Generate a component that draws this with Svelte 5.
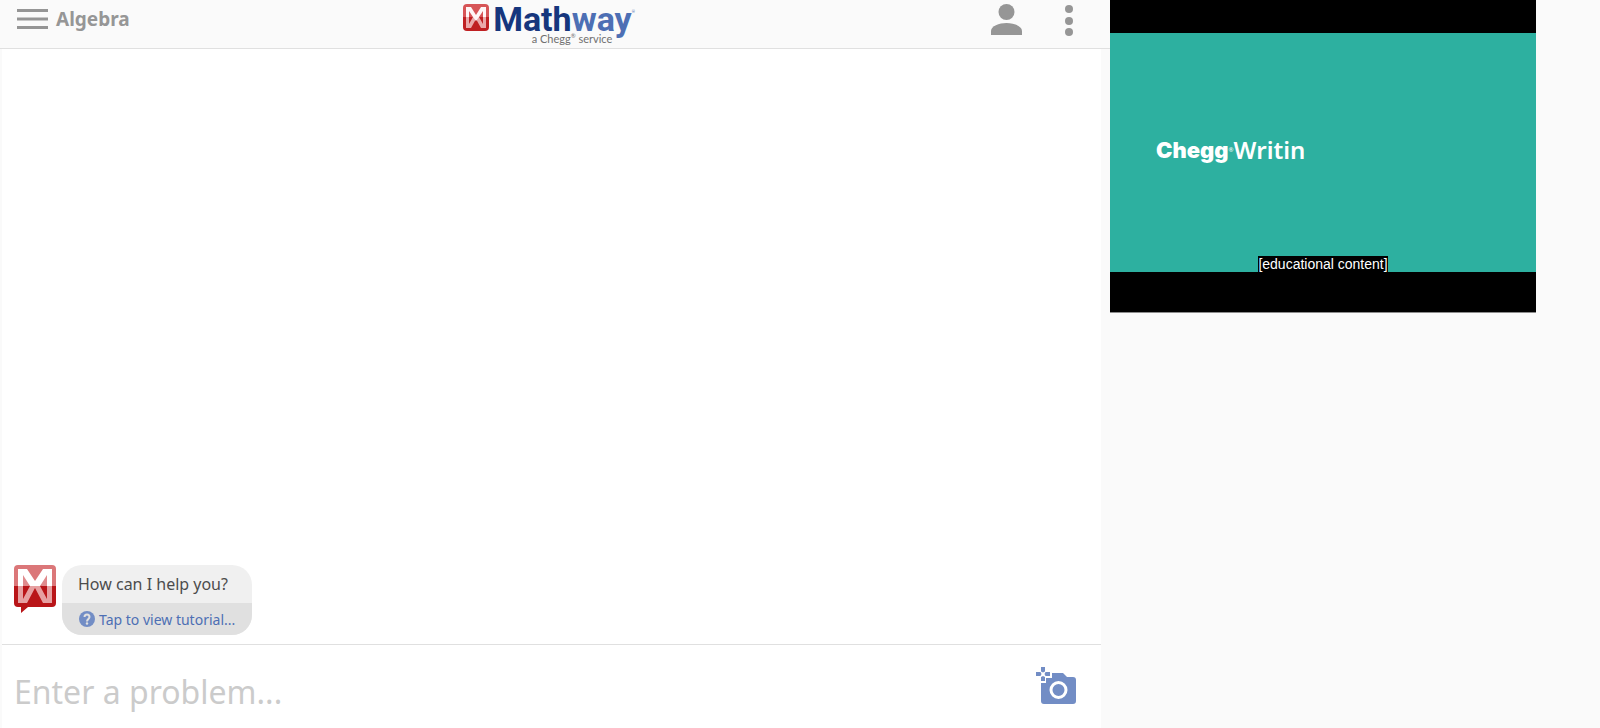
<script>
  let subject = 'Algebra';
  let problem = '';
</script>

<div class="page">
  <main class="app">
    <header class="topbar">
      <button class="subject">
        <svg width="31" height="20" viewBox="0 0 31 20" aria-hidden="true">
          <path fill="#959595" d="M0 0H31V3H0ZM0 8.500H31V11.500H0ZM0 17H31V20H0Z" />
        </svg>
        <span>{subject}</span>
      </button>

      <a class="brand" href="/" aria-label="Mathway, a Chegg service">
        <svg width="26" height="27" viewBox="0 0 26 27" aria-hidden="true">
          <path fill="#d75557" d="M4 0H22Q26 0 26 4V13H0V4Q0 0 4 0Z" />
          <path fill="#bf2022" d="M0 13H26V23Q26 27 22 27H4Q0 27 0 23Z" />
          <path fill="#eaa9aa" d="M3 13H6V20L10 13H16L20 20V13H23V24H18L13 15L8 24H3Z" />
          <path fill="#fff6f6" d="M3 13V3H8L13 11L18 3H23V13H20V7L16 13L13 17L10 13L6 7V13Z" />
        </svg>
        <span class="brand-text">
          <span class="wordmark"><b>Math</b><b class="way">way</b><sup>®</sup></span>
          <span class="tagline">a Chegg<sup>®</sup> service</span>
        </span>
      </a>

      <div class="actions">
        <button aria-label="Account">
          <svg width="31" height="32" viewBox="0 0 31 32">
            <circle cx="15.500" cy="8" r="8" fill="#969696" />
            <path fill="#969696" d="M0 31V27C0 22 8 19 15.500 19S31 22 31 27V31Z" />
          </svg>
        </button>
        <button aria-label="More options">
          <svg width="8" height="32" viewBox="0 0 8 32">
            <g fill="#969696"><circle cx="4" cy="5" r="4" /><circle cx="4" cy="17" r="4" /><circle cx="4" cy="28" r="4" /></g>
          </svg>
        </button>
      </div>
    </header>

    <section class="chat">
      <div class="messages">
        <svg width="42" height="48" viewBox="0 0 42 48" aria-hidden="true">
          <path fill="#db7779" d="M4 0H38Q42 0 42 4V21H0V4Q0 0 4 0Z" />
          <path fill="#b91518" d="M0 21H42V38Q42 42 38 42H14L7 48V42H4Q0 42 0 38Z" />
          <path fill="#e6a0a1" d="M4 21H9V34L16 21H26L33 34V21H38V38H29L21 23L13 38H4Z" />
          <path fill="#e6a0a1" d="M9 8V21H14L17 16L12 8ZM33 8V21H28L25 16L30 8Z" opacity="0.5" />
          <path fill="#ffffff" d="M4 21V4H13L21 16L29 4H38V21H33V10L26 21H16L9 10V21Z" />
        </svg>
        <div class="bubble">
          <p>How can I help you?</p>
          <button class="tutorial">
            <svg width="16" height="16" viewBox="0 0 16 16" aria-hidden="true">
              <circle cx="8" cy="8" r="8" fill="#728dc5" />
              <path fill="none" stroke="#e0e0e0" stroke-width="2" d="M5.500 6C5.500 2.500 10.500 2.500 10.500 6C10.500 8 8 8 8 10.500" />
              <circle cx="8" cy="12.500" r="1.200" fill="#e0e0e0" />
            </svg>
            <span>Tap to view tutorial...</span>
          </button>
        </div>
      </div>

      <div class="entry">
        <input type="text" placeholder="Enter a problem..." aria-label="Enter a problem" bind:value={problem}>
        <button class="camera" aria-label="Take a photo">
          <svg width="40" height="38" viewBox="0 0 40 38">
            <path fill="#728dc5" d="M16 6H27L31 10H37Q40 10 40 13V34Q40 37 37 37H8Q5 37 5 34V16H10V11H16Z" />
            <circle cx="22.500" cy="23" r="7.500" fill="none" stroke="#ffffff" stroke-width="3" />
            <path fill="#728dc5" d="M5 0H9V4.500L7 5.500L5 4.500ZM5 14V10L7 9L9 10V14ZM0 5H4.500L5.500 7L4.500 9H0ZM14 5V9H9.500L8.500 7L9.500 5Z" />
          </svg>
        </button>
      </div>
    </section>
  </main>

  <aside class="side">
    <div class="player">
      <div class="frame">
        <div class="title"><b>Chegg</b><sup>®</sup><span>Writin</span></div>
        <span class="caption">[educational content]</span>
      </div>
    </div>
  </aside>
</div>

<style>
  :global(body) {
    margin: 0;
    background: #fafafa;
  }

  .page {
    display: flex;
    height: 100vh;
    font-family: 'Noto Sans', 'Open Sans', sans-serif;
  }

  button {
    padding: 0;
    border: none;
    background: none;
    font: inherit;
    color: inherit;
    cursor: pointer;
  }

  svg { display: block; flex: none; }

  .app {
    flex: 1;
    min-width: 0;
    display: flex;
    flex-direction: column;
  }

  .topbar {
    box-sizing: border-box;
    height: 49px;
    display: grid;
    grid-template-columns: 1fr auto 1fr;
    padding: 0 37px 0 17px;
    border-bottom: 1px solid #e0e0e0;
  }

  .subject {
    display: flex;
    align-items: center;
    align-self: start;
    justify-self: start;
    gap: 8px;
    height: 38px;
    color: #969696;
    font-size: 19px;
    font-weight: 700;
  }

  .brand {
    display: flex;
    gap: 4px;
    padding: 4px 0 0 8px;
    text-decoration: none;
  }

  .brand-text {
    display: flex;
    flex-direction: column;
    align-items: center;
  }

  .wordmark {
    display: flex;
    color: #16367d;
    font: 34px/30px Roboto, sans-serif;
  }

  .way { color: #4d6fb4; }
  .wordmark sup { font-size: 4px; line-height: 16px; color: #4d6fb4; }

  .tagline {
    padding-left: 16px;
    font-family: Lato, sans-serif;
    font-size: 11px;
    line-height: 10px;
    color: #707070;
  }

  .tagline sup { font-size: 6px; line-height: 0; }

  .actions {
    display: flex;
    justify-content: flex-end;
    align-items: flex-start;
    gap: 43px;
    padding-top: 4px;
  }

  .chat {
    flex: 1;
    min-height: 0;
    display: flex;
    flex-direction: column;
    margin: 0 9px 0 2px;
    background: #ffffff;
  }

  .messages {
    flex: 1;
    display: flex;
    align-items: flex-end;
    gap: 6px;
    padding: 0 12px 9px;
  }

  .messages > svg { margin-bottom: 22px; }

  .bubble {
    width: 190px;
    border-radius: 20px;
    overflow: hidden;
    background: #f0f0f0;
    color: #4c4c4c;
    font-size: 16px;
  }

  .bubble p {
    margin: 0;
    padding: 0 16px;
    line-height: 38px;
  }

  .tutorial {
    display: flex;
    align-items: center;
    gap: 4px;
    width: 100%;
    height: 32px;
    padding: 0 17px;
    background: #e0e0e0;
    color: #4d6fb4;
    font-size: 14px;
    white-space: nowrap;
  }

  .entry {
    display: flex;
    align-items: flex-start;
    box-sizing: border-box;
    height: 84px;
    padding: 22px 25px 0 12px;
    border-top: 1px solid #e0e0e0;
  }

  .entry input {
    flex: 1;
    min-width: 0;
    height: 48px;
    padding: 0;
    border: none;
    outline: none;
    background: transparent;
    font: 32px 'Noto Sans', 'Open Sans', sans-serif;
    color: #4c4c4c;
  }

  .entry input::placeholder { color: #cbcbcb; opacity: 1; }

  .side { width: 490px; }

  .player {
    box-sizing: border-box;
    width: 426px;
    height: 313px;
    padding: 33px 0 40px;
    border-bottom: 1px solid #8c8c8c;
    background: #000000;
  }

  .frame {
    display: flex;
    flex-direction: column;
    justify-content: space-between;
    box-sizing: border-box;
    height: 239px;
    padding-top: 99px;
    background: #2db0a0;
  }

  .title {
    display: flex;
    align-items: center;
    padding-left: 46px;
    color: #ffffff;
    font: 24px/36px 'Noto Sans', sans-serif;
  }

  .title b { font-family: Inter, sans-serif; font-size: 22px; font-weight: 900; }
  .title span { font-weight: 600; }
  .title sup { font-size: 6px; }

  .caption {
    align-self: center;
    background: #000000;
    color: #ffffff;
    font: 14px/16px 'Liberation Sans', Arial, sans-serif;
  }
</style>
